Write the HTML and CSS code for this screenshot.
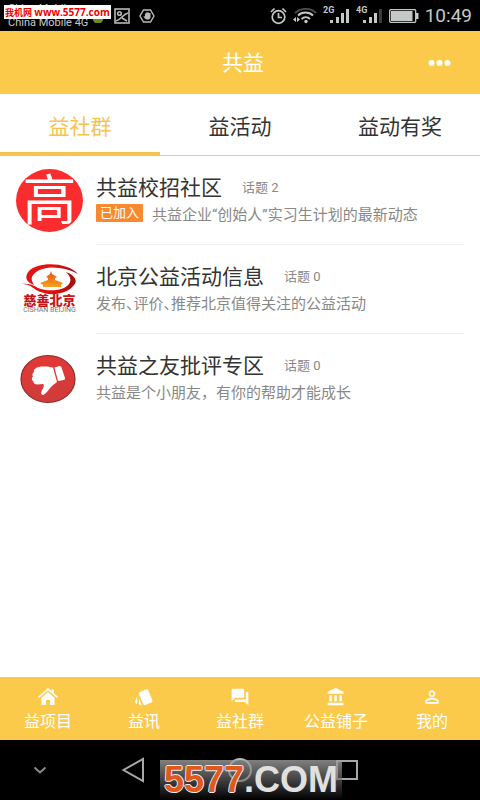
FILE: index.html
```
<!DOCTYPE html>
<html lang="zh-CN">
<head>
  <meta charset="UTF-8" />
  <meta name="viewport" content="width=device-width, initial-scale=1" />
  <title>共益</title>
  <link rel="stylesheet" href="styles.css">
</head>
<body>

<div class="status-bar">
  <div class="carriers">
    <span>China Mobile</span>
    <span>China Mobile 4G</span>
  </div>
  <svg width="14" height="14" viewBox="0 0 14 14"><circle cx="7" cy="9" r="5.500" fill="#6f8a1c"/></svg>
  <svg width="16" height="16" viewBox="0 0 16 16" fill="none" stroke="#b9b9b9" stroke-width="1.600">
    <rect x="1" y="1" width="14" height="14"/>
    <circle cx="5.500" cy="5.500" r="1.800"/>
    <path d="M2 13c5-1 7-7 12-8M8 10l5 3"/>
  </svg>
  <svg width="16" height="16" viewBox="0 0 16 16">
    <path d="M4.500 2h7L15 8l-3.500 6h-7L1 8z" fill="none" stroke="#b9b9b9" stroke-width="1.400"/>
    <path d="M4.500 8l1.500.5V5.500h1V4.500h3v.5h1.500v5L10 11.500H7L5 9.500z" fill="#b9b9b9"/>
  </svg>

  <div class="status-right">
    <svg width="17" height="18" viewBox="0 0 17 18" fill="none" stroke="#c4c8c8" stroke-width="1.700">
      <circle cx="8.500" cy="10" r="6.300"/>
      <path d="M8.500 6v4.500H12M1 5l3.500-3.500M16 5l-3.500-3.500"/>
    </svg>
    <svg width="24" height="17" viewBox="0 0 24 17" fill="none" stroke="#c4c8c8" stroke-width="1.900">
      <path d="M2 6C8 .5 18 .5 23 6" stroke="#4c4e4e"/>
      <path d="M5 8.500c4-4 11-4 15 0M8.500 12c2.500-2.300 6-2.300 8.500 0"/>
      <circle cx="13" cy="14.500" r="1.700" fill="#c4c8c8" stroke="none"/>
      <path d="M3 10v5l-3-2.500zM4 10v5l3-2.500z" fill="#c4c8c8" stroke="none"/>
    </svg>
    <svg class="signal" width="27" height="21" viewBox="0 0 27 21" fill="#c4c8c8">
      <text x="0" y="8">2G</text>
      <path d="M7 15h3v3H7zM13 12h3v6h-3zM18 8h3v10h-3zM23 4h3v14h-3z"/>
    </svg>
    <svg class="signal" width="27" height="21" viewBox="0 0 27 21" fill="#c4c8c8">
      <text x="0" y="8">4G</text>
      <path d="M7 15h3v3H7zM13 12h3v6h-3zM18 8h3v10h-3z"/>
      <path d="M23 4h3v14h-3z" fill="#3c3e3e"/>
    </svg>
    <svg width="30" height="14" viewBox="0 0 30 14">
      <rect x=".7" y=".7" width="26" height="12.600" rx="1" fill="none" stroke="#c4c8c8" stroke-width="1.300"/>
      <path d="M2 2h21.500v10H2zM27 4h2.500v6H27z" fill="#c4c8c8"/>
    </svg>
    <span class="clock">10:49</span>
  </div>
</div>

<header class="header">
  <h1>共益</h1>
  <button class="more" aria-label="更多">
    <svg width="24" height="6" viewBox="0 0 24 6" fill="#fff"><circle cx="3.500" cy="3" r="3"/><circle cx="11.500" cy="3" r="3"/><circle cx="19.500" cy="3" r="3"/></svg>
  </button>
</header>

<div class="tabs">
  <button class="tab active">益社群</button>
  <button class="tab">益活动</button>
  <button class="tab">益动有奖</button>
</div>

<main class="list">
  <a class="item" href="#">
    <svg class="avatar" width="68" height="64" viewBox="0 0 68 64">
      <ellipse cx="33.500" cy="31.500" rx="33.500" ry="31.500" fill="#fb2c2d"/>
      <text class="avatar-text" x="33.500" y="51" text-anchor="middle">高</text>
    </svg>
    <div class="item-body">
      <div class="item-head">
        <h2>共益校招社区</h2>
        <span class="topics">话题 2</span>
      </div>
      <div class="item-desc"><span class="badge">已加入</span><p>共益企业“创始人”实习生计划的最新动态</p></div>
    </div>
  </a>

  <a class="item" href="#">
    <svg class="avatar" width="68" height="64" viewBox="0 0 68 64">
      <defs>
        <linearGradient id="gate" x1="0" y1="0" x2="0" y2="1"><stop offset="0" stop-color="#d9541a"/><stop offset="1" stop-color="#fba01c"/></linearGradient>
        <linearGradient id="swirl"><stop offset="0" stop-color="#e31414"/><stop offset=".55" stop-color="#e0120f"/><stop offset="1" stop-color="#a50d10"/></linearGradient>
      </defs>
      <path d="M62 16C52 4 22 3 13 13c-6 7-1 12 5 14-2-4-4-7 0-11C25 8 45 7 62 16z" fill="url(#swirl)"/>
      <path d="M5 26c8-1 12 1 17 4 10 4 26 3 31-4 3-4 1-8-3-12 9 3 12 9 8 13-7 10-26 12-38 5-5-4-8-6-15-6z" fill="url(#swirl)"/>
      <path d="M35 13l1 3 5 3-2 1v2l8 3-2 2v2H27v-2l-3-2 8-3v-2l-2-1 4-3z" fill="url(#gate)"/>
      <text class="logo-cn" x="33.500" y="47" text-anchor="middle">慈善北京</text>
      <text class="logo-en" x="33.500" y="54" text-anchor="middle">CISHAN BEIJING</text>
    </svg>
    <div class="item-body">
      <div class="item-head">
        <h2>北京公益活动信息</h2>
        <span class="topics">话题 0</span>
      </div>
      <div class="item-desc"><p class="half-marks">发布、评价、推荐北京值得关注的公益活动</p></div>
    </div>
  </a>

  <a class="item" href="#">
    <svg class="avatar" width="68" height="64" viewBox="0 0 68 64">
      <defs>
        <linearGradient id="red" x1="0" y1="0" x2="0" y2="1"><stop offset="0" stop-color="#e23836"/><stop offset="1" stop-color="#cf3c3b"/></linearGradient>
      </defs>
      <ellipse cx="32" cy="32" rx="27" ry="23.500" fill="url(#red)" stroke="#8f2b2c" stroke-width="1.200"/>
      <path d="M38.500 20.500l5-1.500c1 0 1.500.5 2 1.500l3.500 10.500c0 1.500-.5 2-1.500 2l-5.500 1z" fill="#fff"/>
      <path d="M37 20.500c-3-.5-5-1-9-1-4 0-7 .5-8.500 2-1.500 1-2 2-1.500 3.500-2 1.500-2 3-1 4.500-2 2-1 4 .5 5 0 2 1.500 3 4 3l6-.5c1 3-1 5-2 7.500-1 2 0 3.500 1.500 3.500 3-1 5-4.500 8-8 2-2.500 4-3 6-5z" fill="#fff"/>
    </svg>
    <div class="item-body">
      <div class="item-head">
        <h2>共益之友批评专区</h2>
        <span class="topics">话题 0</span>
      </div>
      <div class="item-desc"><p>共益是个小朋友，有你的帮助才能成长</p></div>
    </div>
  </a>
</main>

<nav class="bottom-nav">
  <a href="#">
    <svg width="20" height="20" viewBox="0 0 20 20" fill="#fff"><path d="M10 1l3.500 3V2.500H16v3.700l4 3.600-1 1.200-9-7.800L1 11 0 9.800z"/><path d="M10 5l6.500 5.700V18H12v-5H8v5H3.500v-7.300z"/></svg>
    <span>益项目</span>
  </a>
  <a href="#">
    <svg width="20" height="20" viewBox="0 0 24 24" fill="#fff"><path d="M2.530 19.650l1.340.56v-9.030l-2.430 5.860c-.41 1.020.08 2.190 1.090 2.610zm19.500-3.700L17.070 3.980c-.31-.75-1.040-1.210-1.810-1.230-.26 0-.53.04-.79.15L7.100 5.950c-.75.31-1.210 1.030-1.230 1.800-.01.27.04.54.15.8l4.960 11.970c.31.76 1.050 1.220 1.830 1.230.26 0 .52-.05.77-.15l7.360-3.050c1.020-.42 1.510-1.590 1.090-2.600zM5.880 19.750c0 1.100.9 2 2 2h1.450l-3.450-8.340v6.340z"/></svg>
    <span>益讯</span>
  </a>
  <a href="#">
    <svg width="20" height="20" viewBox="0 0 24 24" fill="#fff"><path d="M21 6h-2v9H6v2c0 .55.45 1 1 1h11l4 4V7c0-.55-.45-1-1-1zm-4 6V3c0-.55-.45-1-1-1H3c-.55 0-1 .45-1 1v14l4-4h10c.55 0 1-.45 1-1z"/></svg>
    <span>益社群</span>
  </a>
  <a href="#">
    <svg width="20" height="20" viewBox="0 0 24 24" fill="#fff"><path d="M4 10v7h3v-7H4zm6 0v7h3v-7h-3zM2 22h19v-3H2v3zm14-12v7h3v-7h-3zm-4.500-9L2 6v2h19V6l-9.500-5z"/></svg>
    <span>公益铺子</span>
  </a>
  <a href="#">
    <svg width="20" height="20" viewBox="0 0 24 24" fill="#fff"><path d="M12 5.900a2.100 2.100 0 1 1 0 4.200 2.100 2.100 0 0 1 0-4.200m0 9c2.970 0 6.100 1.460 6.100 2.100v1.100H5.900V17c0-.64 3.130-2.100 6.100-2.100M12 4C9.790 4 8 5.790 8 8s1.790 4 4 4 4-1.790 4-4-1.790-4-4-4zm0 9c-2.670 0-8 1.340-8 4v3h16v-3c0-2.660-5.330-4-8-4z"/></svg>
    <span>我的</span>
  </a>
</nav>

<div class="system-nav">
  <button aria-label="收起"><svg width="14" height="8" viewBox="0 0 14 8" fill="none" stroke="#8a8a8a" stroke-width="2"><path d="M1.500 1.500L7 6.500l5.500-5"/></svg></button>
  <button aria-label="返回"><svg width="24" height="26" viewBox="0 0 24 26" fill="none" stroke="#a8a8a8" stroke-width="2"><path d="M22 2v22L2.500 13z"/></svg></button>
  <button aria-label="主页"><svg width="26" height="26" viewBox="0 0 26 26" fill="none" stroke="#b8b8b8" stroke-width="2"><circle cx="13" cy="13" r="11"/></svg></button>
  <button aria-label="最近任务"><svg width="22" height="20" viewBox="0 0 22 20" fill="none" stroke="#a8a8a8" stroke-width="2"><path d="M1 1h20v18H1z"/></svg></button>
  <div class="watermark-bottom"><span>5577</span>.COM</div>
</div>

<div class="watermark-top">我机网 <span>www.5577.com</span></div>

</body>
</html>
```
FILE: styles.css
```
* {
  box-sizing: border-box;
  margin: 0;
  padding: 0;
}

body {
  font-family: Roboto, "Noto Sans CJK SC", sans-serif;
  min-height: 100vh;
  display: flex;
  flex-direction: column;
  background: #fff;
  color: #333;
  position: relative;
}

a {
  color: inherit;
  text-decoration: none;
}

button {
  border: none;
  background: none;
  font-family: inherit;
  cursor: pointer;
}

svg {
  display: block;
  flex-shrink: 0;
}

/* status bar */
.status-bar {
  height: 31px;
  background: #000;
  display: flex;
  align-items: center;
  gap: 9px;
  padding: 0 8px;
  overflow: hidden;
}

.carriers {
  width: 74px;
  font-size: 11px;
  line-height: 14px;
  color: #c8c8c8;
  white-space: nowrap;
}

.carriers span {
  display: block;
}

.status-right {
  margin-left: auto;
  display: flex;
  align-items: center;
  gap: 6px;
}

.signal text {
  font-size: 9px;
  font-weight: bold;
}

.clock {
  font-size: 19px;
  color: #c4c8c8;
}

/* header */
.header {
  height: 63px;
  background: #fcca4b;
  display: grid;
  grid-template-columns: 1fr auto 1fr;
  align-items: center;
  padding: 0 24px 0 30px;
}

.header h1 {
  grid-column: 2;
  font-size: 21px;
  font-weight: normal;
  color: #fff;
  padding-bottom: 4px;
}

.more {
  justify-self: end;
  padding: 8px 4px;
}

/* tabs */
.tabs {
  display: grid;
  grid-template-columns: repeat(3, 1fr);
  height: 62px;
  box-shadow: inset 0 -1px #ccc;
}

.tab {
  font-size: 21px;
  color: #333;
  border-top: 4px solid transparent;
  border-bottom: 4px solid transparent;
}

.tab.active {
  color: #f5c44f;
  border-bottom-color: #f5c44f;
}

/* list */
.list {
  flex: 1;
}

.item {
  display: flex;
  align-items: center;
  gap: 12px;
  padding: 0 16px;
}

.item-body {
  flex: 1;
  padding: 16px 0 18px;
  border-bottom: 1px solid #eee;
}

.item:last-child .item-body {
  border-bottom-color: transparent;
}

.item-head {
  display: flex;
  align-items: center;
  gap: 20px;
  height: 28px;
}

.item-head h2 {
  font-size: 21px;
  font-weight: normal;
}

.topics {
  font-size: 13px;
  color: #888;
}

.item-desc {
  display: flex;
  align-items: center;
  gap: 9px;
  height: 26px;
  font-size: 15px;
  color: #888;
  white-space: nowrap;
}

.half-marks {
  font-feature-settings: "halt";
}

.badge {
  background: #f78a30;
  color: #fff;
  font-size: 13px;
  line-height: 18px;
  padding: 0 4px;
  border-radius: 1px;
}

.avatar-text {
  font-size: 54px;
  fill: #fff;
}

.logo-cn {
  font-size: 13px;
  font-weight: 900;
  fill: #c5161c;
}

.logo-en {
  font-size: 7px;
  fill: #777;
}

/* bottom navigation */
.bottom-nav {
  height: 63px;
  background: #fcca4b;
  display: grid;
  grid-template-columns: repeat(5, 1fr);
}

.bottom-nav a {
  display: flex;
  flex-direction: column;
  align-items: center;
  padding-top: 10px;
  gap: 4px;
  font-size: 16px;
  line-height: 22px;
  color: #fff;
}

.system-nav {
  position: relative;
  height: 60px;
  background: #000;
  display: grid;
  grid-template-columns: 3fr 4fr 4fr 4fr 3fr;
}

.system-nav button {
  display: flex;
  align-items: center;
  justify-content: center;
}

/* watermarks */
.watermark-top {
  position: absolute;
  left: 4px;
  top: 5px;
  height: 14px;
  padding: 0 1px;
  background: #fff;
  color: #e00;
  font: bold 9px/14px "Open Sans", "Noto Sans CJK SC", sans-serif;
  white-space: nowrap;
}

.watermark-top span {
  font-size: 10px;
}

.watermark-bottom {
  position: absolute;
  left: 160px;
  bottom: 0;
  height: 40px;
  padding: 0 4px;
  background: linear-gradient(rgba(160, 160, 160, 0.8), rgba(0, 0, 0, 0.4));
  color: #e0e0e0;
  font: bold 36px/40px "Liberation Sans", sans-serif;
}

.watermark-bottom span {
  color: #e0581c;
  text-shadow: 1px 0 #eee, -1px 0 #eee, 0 1px #eee, 0 -1px #eee;
}
```
